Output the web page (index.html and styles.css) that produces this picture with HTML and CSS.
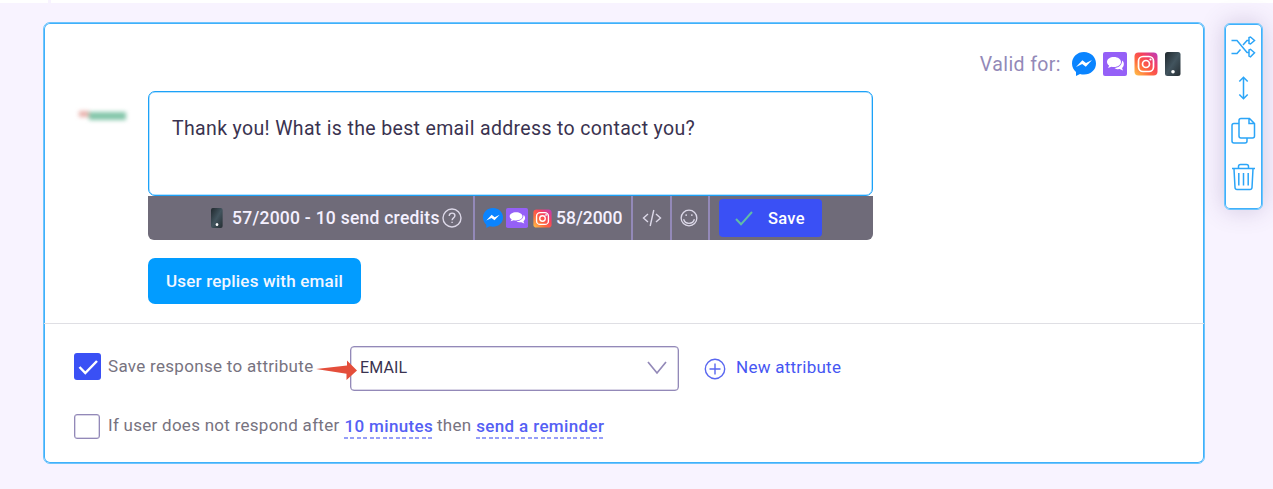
FILE: index.html
```html
<!DOCTYPE html>
<html lang="en">
<head>
<meta charset="utf-8">
<title>Email question</title>
<link rel="stylesheet" href="styles.css">
</head>
<body>
<svg class="defs" width="0" height="0" aria-hidden="true">
  <defs>
    <linearGradient id="insta" x1="0" y1="1" x2="1" y2="0">
      <stop offset="0" stop-color="#ffc64a"/><stop offset=".35" stop-color="#ff6a3c"/><stop offset=".65" stop-color="#f5405f"/><stop offset="1" stop-color="#b93bc0"/>
    </linearGradient>
    <linearGradient id="slab" x1="0" y1="0" x2="1" y2="1">
      <stop offset="0" stop-color="#20282d"/><stop offset=".5" stop-color="#42545e"/><stop offset="1" stop-color="#252e33"/>
    </linearGradient>
    <symbol id="messenger" viewBox="0 0 24 24"><path fill="#0a84ff" d="M12 0C5.200 0 0 4.900 0 11.500c0 3.500 1.600 6.500 4 8.500V24l4-2.100c1.300.4 2.600.5 4 .5 6.800 0 12-4.700 12-11S18.800 0 12 0z"/><path fill="#fff" d="M4 15l6.400-6.800 3.600 2.900L20 8l-6.200 6.800-3.600-2.900z"/></symbol>
    <symbol id="chat" viewBox="0 0 24 24" preserveAspectRatio="none"><rect width="24" height="24" rx="2" fill="#9560f7"/><path fill="#fff" d="M11 5c-4 0-7 2.100-7 4.900 0 1.500.9 2.800 2.200 3.700L5 16l3.500-1.300c.8.2 1.600.3 2.500.3 4 0 7-2.200 7-5S15 5 11 5zM19.100 8.500c.1 4.300-3.300 7.200-7.600 7.500 1.200 1 3.200 1.500 5.200 1.100L20 18.500l-1-2.400c2.500-2.200 2.400-5.900.1-7.600z"/></symbol>
    <symbol id="instagram" viewBox="0 0 24 24"><rect x=".5" y=".5" width="23" height="23" rx="4" fill="url(#insta)"/><g fill="none" stroke="#fff" stroke-width="1.700"><rect x="4.500" y="4.500" width="15" height="15" rx="4.500"/><circle cx="12" cy="12" r="3.500"/></g><circle cx="16.500" cy="7.500" r="1.100" fill="#fff"/></symbol>
    <symbol id="phone" viewBox="0 0 16 24" preserveAspectRatio="none"><rect width="15.500" height="24" rx="2.500" fill="url(#slab)"/><circle class="phone-button" cx="8" cy="19.800" r="1.800"/></symbol>
  </defs>
</svg>
<div class="top-strip"></div>
<main class="page">
  <section class="card">
    <div class="message">
      <div class="valid"><span class="valid-label">Valid for:</span>
        <svg class="v-icon"><use href="#messenger"/></svg><svg class="v-icon"><use href="#chat"/></svg><svg class="v-icon"><use href="#instagram"/></svg><svg class="v-phone"><use href="#phone"/></svg>
      </div>
      <div class="editor-row">
        <div class="brand"><i class="brand-red"></i><i class="brand-green"></i></div>
        <div class="editor">
          <div class="input"><span class="question">Thank you! What is the best email address to contact you?</span></div>
          <div class="toolbar">
            <div class="cell credits">
              <svg class="t-phone"><use href="#phone"/></svg><span class="credits-text">57/2000 - 10 send credits</span>
              <svg class="help" viewBox="0 0 20 20"><circle cx="10" cy="10" r="9"/><path d="M7.200 8c0-1.800 1.200-2.900 2.900-2.900s2.800 1 2.800 2.600c0 2.100-2.800 2.200-2.800 4.500M10.100 13.700v1.300"/></svg>
            </div>
            <div class="cell channels">
              <svg class="t-mess"><use href="#messenger"/></svg><svg class="t-chat"><use href="#chat"/></svg><svg class="t-insta"><use href="#instagram"/></svg><span class="count-text">58/2000</span>
            </div>
            <div class="cell code"><svg width="20" height="18" viewBox="0 0 20 18"><path d="M6 5L1.500 9 6 13M14 5l4.500 4L14 13M11.800 1L8.200 17"/></svg></div>
            <div class="cell smile"><svg width="19" height="19" viewBox="0 0 19 19"><circle cx="9.500" cy="9.500" r="8.300"/><path d="M3.800 10.800c.8 2.800 3 4.300 5.700 4.300s4.900-1.500 5.700-4.300M6.500 5.500v1.800M12.500 5.500v1.800"/></svg></div>
            <div class="cell save-cell"><button class="save"><svg width="18" height="15" viewBox="0 0 18 15"><path d="M1 8l5 5.300L17 1"/></svg><span>Save</span></button></div>
          </div>
          <button class="reply">User replies with email</button>
        </div>
      </div>
    </div>
    <div class="options">
      <div class="option attribute-row">
        <div class="check checked"><svg width="27" height="27" viewBox="0 0 27 27"><path d="M5.500 14l5.800 6L23 8"/></svg></div>
        <span class="save-label">Save response to attribute</span>
        <div class="select"><svg class="arrow" width="41" height="20" viewBox="0 0 41 20"><path d="M0 9l31-3.400V.5L41 10.500 30.500 20v-6.200z"/></svg><span class="email">EMAIL</span><svg class="chevron" width="20" height="14" viewBox="0 0 20 14"><path d="M1 1l9 11 9-11"/></svg></div>
        <svg class="plus" width="22" height="22" viewBox="0 0 22 22"><circle cx="11" cy="11" r="9.700"/><path d="M11 5.500v11M5.500 11h11"/></svg>
        <span class="new">New attribute</span>
      </div>
      <div class="option reminder-row">
        <div class="check"></div>
        <span class="if-label">If user does not respond after</span><a class="link minutes">10 minutes</a><span class="then">then</span><a class="link reminder">send a reminder</a>
      </div>
    </div>
  </section>
  <aside class="tools">
    <svg width="25" height="22" viewBox="0 0 25 22"><path d="M.5 4.500H6l10 12h2M.5 17.500H6l3.500-4M12 9l4-4.500h2M18 1.500v6l1.500.5 4-3.500-4-3.500zM18 14v6l1.500.8 4-4-4-3.500z"/></svg>
    <svg width="25" height="24" viewBox="0 0 25 24"><path d="M12.500 1.500v21M8.300 5.500l4.200-4.300 4.200 4.300M8.300 18.500l4.200 4.300 4.200-4.300"/></svg>
    <svg width="25" height="28" viewBox="0 0 25 28"><path d="M7.500 6.500H3Q1 6.500 1 8.500V24q0 2 2 2h11q2 0 2-2v-3M10 1.500h8.500L23.500 6.500V19q0 2-2 2H10q-2 0-2-2V3.500q0-2 2-2zM18 1.500V6.500h5.500"/></svg>
    <svg width="25" height="28" viewBox="0 0 25 28"><path d="M1 5.500h23M7.500 5V3.500q0-2 2-2h6q2 0 2 2V5M3 6l1 18.500q.2 2 2 2h13q1.800 0 2-2L22 6M7.800 10v12.500M12.500 10v12.500M17.200 10v12.500"/></svg>
  </aside>
</main>
</body>
</html>
```
FILE: styles.css
```css
* { box-sizing: border-box; }
body { margin: 0; height: 489px; overflow: hidden; background: #f8f3ff; font-family: Roboto, sans-serif; font-size: 17px; color: #77737f; }
svg { display: block; flex: none; fill: none; }
.defs { position: absolute; }
button { font: inherit; border: 0; padding: 0; }
span, a, button { white-space: nowrap; }
.top-strip { height: 3px; background: linear-gradient(90deg, #fff 48px, #f8f3ff 48px 51px, #fff 51px); }
.page { display: flex; padding: 19px 10px 0 43px; gap: 19px; align-items: flex-start; }
.card { width: 1162px; height: 442px; background: #fff; border: 1px solid #6fc4fc; border-radius: 7px; box-shadow: inset 0 0 0 1px #3fb0fb; }
.message { height: 301px; border-bottom: 1px solid #dfdfe4; padding: 27px 23px 0 31px; }
.valid { display: flex; justify-content: flex-end; align-items: center; height: 28px; }
.valid-label { font-size: 19.500px; color: #9389b8; margin-right: 11px; letter-spacing: .4px; }
.v-icon { width: 24px; height: 24px; margin-right: 7px; }
.v-phone { width: 16px; height: 24px; }
.phone-button { fill: #fff; }
.editor-row { display: flex; padding-top: 13px; }
.brand { width: 73px; height: 40px; padding: 20px 0 0 4px; display: flex; align-items: flex-start; filter: blur(2.300px); }
.brand-red { width: 10px; height: 6px; background: #e9b3ae; }
.brand-green { width: 37px; height: 8px; margin-top: 1px; background: #84c6aa; }
.editor { width: 725px; }
.input { height: 105px; border: 1px solid #1ca2f8; border-radius: 7px; padding: 24px 23px; background: #fff; box-shadow: inset 0 0 0 .500px #6fc4fc; }
.question { font-size: 19.500px; line-height: 25px; color: #3a3350; display: block; letter-spacing: .350px; }
.toolbar { height: 44px; background: #6f6b79; border-radius: 0 0 6px 6px; display: flex; color: #f4f0ff; font-weight: 500; font-size: 17.500px; }
.cell { display: flex; align-items: center; border-right: 2px solid #9389b8; }
.cell svg { stroke: #dcd8e8; stroke-width: 1.400; }
.cell .t-phone, .cell .t-mess, .cell .t-chat, .cell .t-insta { stroke: none; }
.credits { width: 327px; padding-left: 63px; }
.t-phone { width: 12px; height: 20px; }
.toolbar .phone-button { fill: #71838b; }
.credits-text { margin-left: 9px; letter-spacing: .250px; }
.help { width: 20px; height: 20px; margin-left: auto; margin-right: 11px; }
.channels { width: 158px; padding-left: 8px; }
.t-mess { width: 20px; height: 20px; }
.t-chat { width: 22px; height: 20px; margin-left: 3px; }
.t-insta { width: 19px; height: 19px; margin-left: 5px; }
.count-text { margin-left: 4px; }
.code { width: 39px; justify-content: center; }
.smile { width: 38px; justify-content: center; }
.smile svg { width: 18px; height: 18px; margin-right: 2px; }
.save-cell { border: 0; padding-left: 9px; }
.save { width: 103px; height: 38px; border-radius: 4px; background: #3a50f5; color: #fff; display: flex; align-items: center; padding-left: 16px; font-size: 16.500px; letter-spacing: .3px; }
.save svg { stroke: #61bda6; stroke-width: 2; margin-right: 15px; }
.reply { display: block; width: 213px; height: 46px; margin-top: 18px; border-radius: 7px; background: #029cff; color: #f3f6ff; font-weight: 500; letter-spacing: .2px; }
.options { padding: 22px 29px 0 30px; }
.option { display: flex; align-items: center; }
.attribute-row { height: 45px; }
.check { width: 26px; height: 25px; border: 1px solid #9389b8; border-radius: 3px; flex: none; box-shadow: inset 0 0 0 .500px #b5aecf; }
.checked { width: 27px; height: 27px; border: 0; background: #3a50f5; margin-top: -4px; box-shadow: none; }
.checked svg { stroke: #fff; stroke-width: 2.500; }
.save-label { margin-left: 7px; width: 242px; margin-top: -5px; letter-spacing: .3px; }
.select { width: 329px; height: 45px; margin-top: -1px; border: 1px solid #9389b8; border-radius: 4px; display: flex; align-items: center; justify-content: space-between; padding: 0 11px 0 9px; position: relative; color: #3a3350; box-shadow: inset 0 0 0 .500px #b5aecf; }
.email { font-size: 16px; letter-spacing: .1px; margin-top: -1px; }
.arrow { position: absolute; left: -35px; top: 13px; fill: #e44e3b; }
.chevron { stroke: #9389b8; stroke-width: 1.700; }
.plus { margin-left: 25px; margin-top: 1px; stroke: #5967f0; stroke-width: 1.400; }
.new { margin-left: 10px; margin-top: -3px; color: #4656f3; letter-spacing: .250px; }
.reminder-row { margin-top: 23px; height: 25px; }
.if-label { margin-left: 8px; margin-top: -3px; letter-spacing: .270px; }
.link { color: #5460f4; font-weight: 500; background: repeating-linear-gradient(90deg, #969ff8 0 4px, transparent 4px 6.500px) bottom / 100% 2px no-repeat; height: 24px; line-height: 22px; letter-spacing: .350px; }
.minutes { margin-left: 5px; }
.then { margin: -3px 5px 0 4px; letter-spacing: .2px; }
.tools { width: 39px; height: 187px; margin-top: 1px; border: 1px solid #6fc4fc; border-radius: 6px; background: #fff; display: flex; flex-direction: column; align-items: center; padding-top: 12px; box-shadow: inset 0 0 0 1px #3fb0fb, 0 0 24px rgba(80,55,120,.23); }
.tools svg { stroke: #2ba5f8; stroke-width: 1.500; margin-bottom: 17.500px; }
```
